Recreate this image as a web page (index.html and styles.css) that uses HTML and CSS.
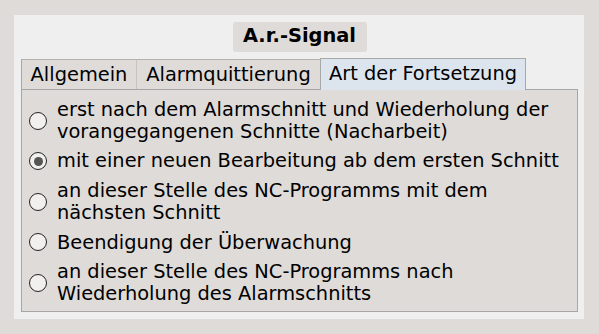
FILE: index.html
```html
<!DOCTYPE html>
<html>
<head>
<meta charset="utf-8">
<link rel="stylesheet" href="styles.css">
</head>
<body>
<div class="panel">
  <div class="title-row"><div class="title">A.r.-Signal</div></div>
  <div class="tabs">
    <div class="tab tab-1">Allgemein</div>
    <div class="tab tab-2">Alarmquittierung</div>
    <div class="tab tab-3 active">Art der Fortsetzung</div>
  </div>
  <div class="pane">
    <div class="opt"><span class="radio"></span><span class="label">erst nach dem Alarmschnitt und Wiederholung der<br>vorangegangenen Schnitte (Nacharbeit)</span></div>
    <div class="opt"><span class="radio checked"></span><span class="label">mit einer neuen Bearbeitung ab dem ersten Schnitt</span></div>
    <div class="opt"><span class="radio"></span><span class="label">an dieser Stelle des NC-Programms mit dem<br>nächsten Schnitt</span></div>
    <div class="opt"><span class="radio"></span><span class="label">Beendigung der Überwachung</span></div>
    <div class="opt"><span class="radio"></span><span class="label">an dieser Stelle des NC-Programms nach<br>Wiederholung des Alarmschnitts</span></div>
  </div>
</div>
</body>
</html>
```
FILE: styles.css
```css
html, body {
  margin: 0;
  padding: 0;
}
body {
  background: #dfdbd8;
  width: 599px;
  height: 334px;
  padding: 15px 0 0 14px;
  box-sizing: border-box;
  font-family: "DejaVu Sans", sans-serif;
  font-size: 19.4px;
  color: #000;
}
.panel {
  width: 570px;
  height: 304px;
  background: #efefef;
  box-sizing: border-box;
  padding: 7px 6px 0 7px;
  display: flex;
  flex-direction: column;
}
.title-row {
  display: flex;
  justify-content: center;
}
.title {
  background: #dfdbd8;
  border-radius: 3px;
  width: 134px;
  height: 30px;
  box-sizing: border-box;
  padding-top: 3px;
  text-align: center;
  font-weight: bold;
  line-height: 21.7px;
  white-space: nowrap;
}
.tabs {
  display: flex;
  align-items: flex-end;
  margin-top: 6px;
  height: 31px;
  position: relative;
  z-index: 1;
}
.tab {
  height: 30px;
  box-sizing: border-box;
  padding-top: 4px;
  line-height: 21.7px;
  text-align: center;
  background: #dfdbd8;
  border-top: 1px solid #b4b0ad;
  border-left: 1px solid #c8c4c1;
  white-space: nowrap;
}
.tab-1 {
  width: 115px;
  border-left: 1px solid #a8a8a8;
}
.tab-2 {
  width: 184px;
}
.tab-3 {
  width: 206px;
}
.tab.active {
  height: 32px;
  margin-bottom: -1px;
  background: #dce5ee;
  border: 1px solid #a8a8a8;
  border-bottom: none;
}
.pane {
  width: 557px;
  height: 223px;
  box-sizing: border-box;
  background: #dfdbd8;
  border: 1px solid #a6a6a6;
  padding: 9px 0 0 7px;
  display: flex;
  flex-direction: column;
  gap: 8px;
}
.opt {
  display: flex;
  align-items: center;
  gap: 10px;
  line-height: 21.7px;
  white-space: nowrap;
}
.radio {
  width: 18px;
  height: 18px;
  box-sizing: border-box;
  border: 1.5px solid #222;
  border-radius: 50%;
  background: #f2f0ef;
  flex: none;
  display: flex;
  align-items: center;
  justify-content: center;
}
.radio.checked::after {
  content: "";
  width: 9px;
  height: 9px;
  border-radius: 50%;
  background: #555;
}
```
